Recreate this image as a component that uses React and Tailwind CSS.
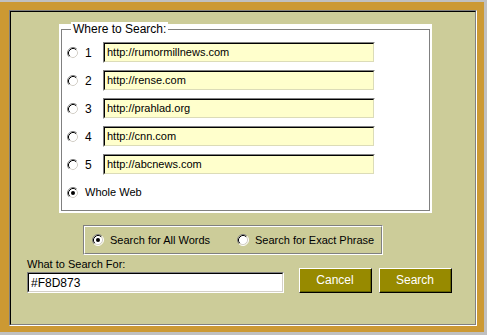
import React from "react";

function Radio({ checked }) {
  return (
    <svg width="12" height="12" viewBox="0 0 12 12" className="shrink-0">
      <circle cx="6" cy="6" r="5" fill="#ffffff" />
      <path d="M2.11 9.89 A5.5 5.5 0 0 1 9.89 2.11" fill="none" stroke="#808080" strokeWidth="1" />
      <path d="M9.89 2.11 A5.5 5.5 0 0 1 2.11 9.89" fill="none" stroke="#ffffff" strokeWidth="1" />
      <path d="M2.82 9.18 A4.5 4.5 0 0 1 9.18 2.82" fill="none" stroke="#000000" strokeWidth="1" />
      <path d="M9.18 2.82 A4.5 4.5 0 0 1 2.82 9.18" fill="none" stroke="#d4d0c8" strokeWidth="1" />
      {checked && <circle cx="6" cy="6" r="2" fill="#000000" />}
    </svg>
  );
}

function UrlField({ value }) {
  return (
    <div className="border-t border-l border-[#808080] border-b border-r border-b-[#ffffff] border-r-[#ffffff] w-[272px] h-[21px]">
      <div className="h-full border-t border-l border-black border-b border-r border-b-[#dcdcb8] border-r-[#dcdcb8] bg-[#ffffcc] flex items-center pl-[2px] text-black whitespace-nowrap">
        {value}
      </div>
    </div>
  );
}

function Button({ children }) {
  return (
    <div className="border-t border-l border-white border-b border-r border-b-black border-r-black h-[25px]">
      <div className="h-full border-b border-r border-[#666600] flex items-center justify-center text-white text-[12px] bg-[#978a00]">
        {children}
      </div>
    </div>
  );
}

export default function App() {
  const urls = [
    "http://rumormillnews.com",
    "http://rense.com",
    "http://prahlad.org",
    "http://cnn.com",
    "http://abcnews.com",
  ];
  return (
    <div className="w-[487px] h-[335px] bg-[#c0c0c0] pt-[2px] pr-[3px] pb-[3px] font-['Liberation_Sans',Arial,sans-serif] text-[11px] text-black whitespace-nowrap">
      <div className="h-full bg-[#cc9933] pl-[9px] pt-[8px] pr-[7px] pb-[6px]">
        <div className="h-full border-t border-l border-[#808080] border-b border-r border-b-white border-r-white">
          <div className="h-full border-t border-l border-black border-b border-r border-b-[#808080] border-r-[#808080] bg-[#cccc99] pt-[12px] flex flex-col">
            {/* Where to Search group */}
            <div className="ml-[48px] w-[373px] h-[189px] bg-white pt-[5px] px-[2px] pb-[2px]">
              <div className="relative h-full border border-[#808080] pl-[5px] pt-[12px]">
                <span className="absolute left-[9px] top-[-8px] bg-white px-[2px] leading-[14px] text-[12px]">
                  Where to Search:
                </span>
                <div className="flex flex-col gap-[7px]">
                  {urls.map((u, i) => (
                    <div key={i} className="flex items-center h-[21px]">
                      <Radio />
                      <span className="ml-[6px] w-[18px] text-[12px]">{i + 1}</span>
                      <UrlField value={u} />
                    </div>
                  ))}
                  <div className="flex items-center h-[21px]">
                    <Radio checked />
                    <span className="ml-[6px]">Whole Web</span>
                  </div>
                </div>
              </div>
            </div>

            {/* Search mode group */}
            <div className="mt-[12px] ml-[72px] w-[300px] h-[30px] border border-[#808080] border-b-white border-r-white">
              <div className="h-full border border-white border-b-[#808080] border-r-[#808080] flex items-center pl-[7px]">
                <Radio checked />
                <span className="ml-[6px] w-[127px]">Search for All Words</span>
                <Radio />
                <span className="ml-[6px]">Search for Exact Phrase</span>
              </div>
            </div>

            {/* Bottom row */}
            <div className="mt-[2px] ml-[16px] flex items-end">
              <div className="flex flex-col">
                <span className="leading-[14px] mb-[1px]">What to Search For:</span>
                <div className="border-t border-l border-[#808080] border-b border-r border-b-white border-r-white w-[257px] h-[21px]">
                  <div className="h-full border-t border-l border-black border-b border-r border-b-[#d4d0c8] border-r-[#d4d0c8] bg-white flex items-center pl-[2px] text-[12px]">
                    #F8D873
                  </div>
                </div>
              </div>
              <div className="ml-[15px] w-[73px]">
                <Button>Cancel</Button>
              </div>
              <div className="ml-[7px] w-[73px]">
                <Button>Search</Button>
              </div>
            </div>
          </div>
        </div>
      </div>
    </div>
  );
}
